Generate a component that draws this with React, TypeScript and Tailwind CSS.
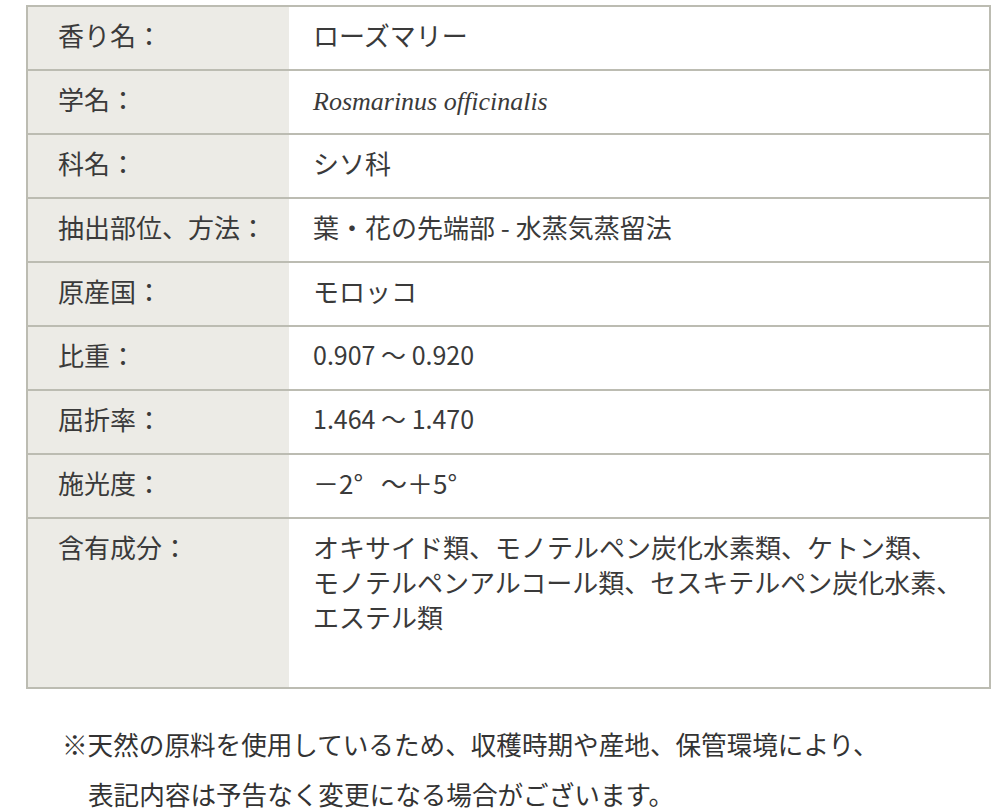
import React from "react";

const rows: { label: string; value: React.ReactNode; last?: boolean; num?: boolean }[] = [
  { label: "香り名：", value: "ローズマリー" },
  {
    label: "学名：",
    value: (
      <span className="italic text-[26px]" style={{ fontFamily: '"Liberation Serif", serif' }}>
        Rosmarinus officinalis
      </span>
    ),
  },
  { label: "科名：", value: "シソ科" },
  { label: "抽出部位、方法：", value: "葉・花の先端部 - 水蒸気蒸留法" },
  { label: "原産国：", value: "モロッコ" },
  { label: "比重：", value: "0.907 ～ 0.920", num: true },
  { label: "屈折率：", value: "1.464 ～ 1.470", num: true },
  {
    label: "施光度：",
    value: (
      <>
        －2°<span className="ml-[18px]">～＋5°</span>
      </>
    ),
  },
  {
    label: "含有成分：",
    value: (
      <>
        オキサイド類、モノテルペン炭化水素類、ケトン類、
        <br />
        モノテルペンアルコール類、セスキテルペン炭化水素、
        <br />
        エステル類
      </>
    ),
    last: true,
  },
];

export default function App() {
  return (
    <div
      className="w-[1000px] h-[810px] bg-white text-[#3a3a3a] pt-[5px]"
      style={{ fontFamily: '"Noto Sans CJK JP", "Noto Sans", sans-serif' }}
    >
      <div className="ml-[26px] w-[965px] border-2 border-[#bcbcb2] flex flex-col">
        {rows.map((r, i) => (
          <div
            key={i}
            className={`flex ${i > 0 ? "border-t-2 border-[#bcbcb2]" : ""}`}
          >
            <div
              className={`w-[261px] shrink-0 bg-[#ecebe6] pl-[30px] pt-[10px] text-[26px] leading-[35px] ${
                r.last ? "h-[168px]" : "h-[62px]"
              }`}
            >
              {r.label}
            </div>
            <div
              className={`flex-1 pl-[24px] pt-[10px] leading-[35px] ${
                r.num ? "text-[25px]" : "text-[26px]"
              }`}
            >
              {r.value}
            </div>
          </div>
        ))}
      </div>
      <div className="mt-[30px] pl-[62px] text-[25.6px] leading-[50px] text-[#333]">
        <div>※天然の原料を使用しているため、収穫時期や産地、保管環境により、</div>
        <div className="pl-[26px]">表記内容は予告なく変更になる場合がございます。</div>
      </div>
    </div>
  );
}
